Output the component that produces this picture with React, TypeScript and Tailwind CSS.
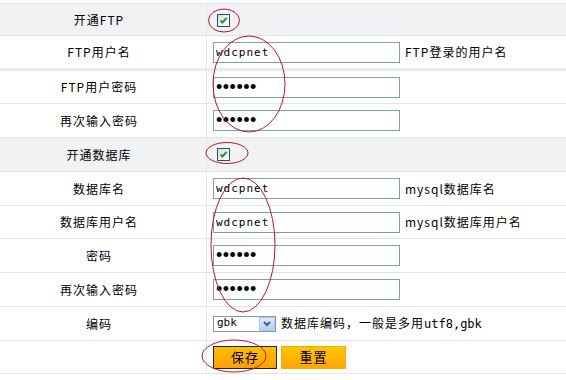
import React from "react";

const font = { fontFamily: '"Noto Sans CJK SC", "Noto Sans", sans-serif' };

function Check() {
  return (
    <div className="w-[13px] h-[13px] border border-[#1c5180] bg-gradient-to-br from-[#dcdcd7] to-[#ffffff] flex items-center justify-center">
      <svg width="9" height="9" viewBox="0 0 9 9">
        <path d="M1.5 4.5 L3.5 6.5 L7.5 2" stroke="#21a121" strokeWidth="2" fill="none" />
      </svg>
    </div>
  );
}

function TextBox({ value, password }: { value: string; password?: boolean }) {
  return (
    <input
      readOnly
      type={password ? "password" : "text"}
      value={value}
      className={
        "w-[187px] h-[21px] border border-[#7f9db9] bg-white px-[2px] text-black outline-none " +
        (password ? "text-[18px]" : "text-[11px]")
      }
      style={
        password
          ? { fontFamily: '"Liberation Sans", sans-serif', letterSpacing: "0.5px" }
          : { fontFamily: '"DejaVu Sans Mono", monospace' }
      }
    />
  );
}

function Row({
  label,
  h,
  gray,
  top,
  thick,
  children,
}: {
  label: string;
  h: string;
  gray?: boolean;
  top?: boolean;
  thick?: boolean;
  children?: React.ReactNode;
}) {
  return (
    <div
      className={
        "flex " +
        h +
        " " +
        (gray ? "bg-[#f1f2f4] " : "bg-white ") +
        (top ? "border-t border-t-[#e1e4e8] " : "") +
        (thick ? "border-b-[3px] border-b-[#e8eaee]" : "border-b border-b-[#e1e4e8]")
      }
    >
      <div className="w-[207px] shrink-0 border-r border-r-[#e6e6e6] flex items-center justify-center pr-[8px] text-[12px] tracking-[1px] text-black">
        {label}
      </div>
      <div className="flex items-center pl-[6px] gap-[5px] text-[12px] tracking-[1px] text-black">{children}</div>
    </div>
  );
}

export default function App() {
  return (
    <div className="relative w-[566px] h-[380px] bg-white pt-[3px] overflow-hidden" style={font}>
      <Row label="开通FTP" h="h-[33px]" gray top>
        <div className="pl-[4px] pt-[1px]">
          <Check />
        </div>
      </Row>
      <Row label="FTP用户名" h="h-[35px]" thick>
        <TextBox value="wdcpnet" />
        <span>FTP登录的用户名</span>
      </Row>
      <Row label="FTP用户密码" h="h-[33px]">
        <TextBox value="123456" password />
      </Row>
      <Row label="再次输入密码" h="h-[34px]">
        <TextBox value="123456" password />
      </Row>
      <Row label="开通数据库" h="h-[34px]" gray>
        <div className="pl-[4px]">
          <Check />
        </div>
      </Row>
      <Row label="数据库名" h="h-[34px]">
        <TextBox value="wdcpnet" />
        <span>mysql数据库名</span>
      </Row>
      <Row label="数据库用户名" h="h-[33px]">
        <TextBox value="wdcpnet" />
        <span>mysql数据库用户名</span>
      </Row>
      <Row label="密码" h="h-[34px]">
        <TextBox value="123456" password />
      </Row>
      <Row label="再次输入密码" h="h-[34px]">
        <TextBox value="123456" password />
      </Row>
      <Row label="编码" h="h-[34px]">
        <div className="w-[63px] h-[16px] border border-[#7f9db9] bg-white flex items-center justify-between">
          <span className="pl-[3px] text-[11px] tracking-normal" style={{ fontFamily: '"DejaVu Sans Mono", monospace' }}>
            gbk
          </span>
          <div className="w-[16px] h-[14px] bg-gradient-to-b from-[#dfe8fc] to-[#b8cdf6] border border-[#b4c8ef] flex items-center justify-center">
            <svg width="8" height="6" viewBox="0 0 8 6">
              <path d="M1 1 L4 4 L7 1" stroke="#4d6185" strokeWidth="2" fill="none" />
            </svg>
          </div>
        </div>
        <span>
          数据库编码，一般是多用<span style={{ fontFamily: '"DejaVu Sans Mono", monospace' }} className="tracking-normal text-[12px]">utf8,gbk</span>
        </span>
      </Row>
      <Row label="" h="h-[33px]">
        <div className="flex gap-[4px] items-center">
          <button className="w-[64px] h-[23px] border border-[#222] bg-gradient-to-b from-[#ffbf00] to-[#ff9e00] text-[13px] text-black tracking-[1px]">
            保存
          </button>
          <button className="w-[65px] h-[23px] border border-[#f0b000] bg-gradient-to-b from-[#ffc600] to-[#ffa600] text-[13px] text-black tracking-[1px]">
            重置
          </button>
        </div>
      </Row>

      <svg className="absolute left-0 top-0 pointer-events-none" width="566" height="380">
        <g stroke="#c0142a" strokeWidth="1" fill="none">
          <ellipse cx="224" cy="20.5" rx="15.5" ry="11.5" />
          <ellipse cx="249" cy="84" rx="36" ry="48" />
          <ellipse cx="227" cy="153" rx="21" ry="10.5" />
          <ellipse cx="243" cy="245" rx="32" ry="67" />
          <ellipse cx="234" cy="356" rx="32" ry="16" />
        </g>
      </svg>
    </div>
  );
}
